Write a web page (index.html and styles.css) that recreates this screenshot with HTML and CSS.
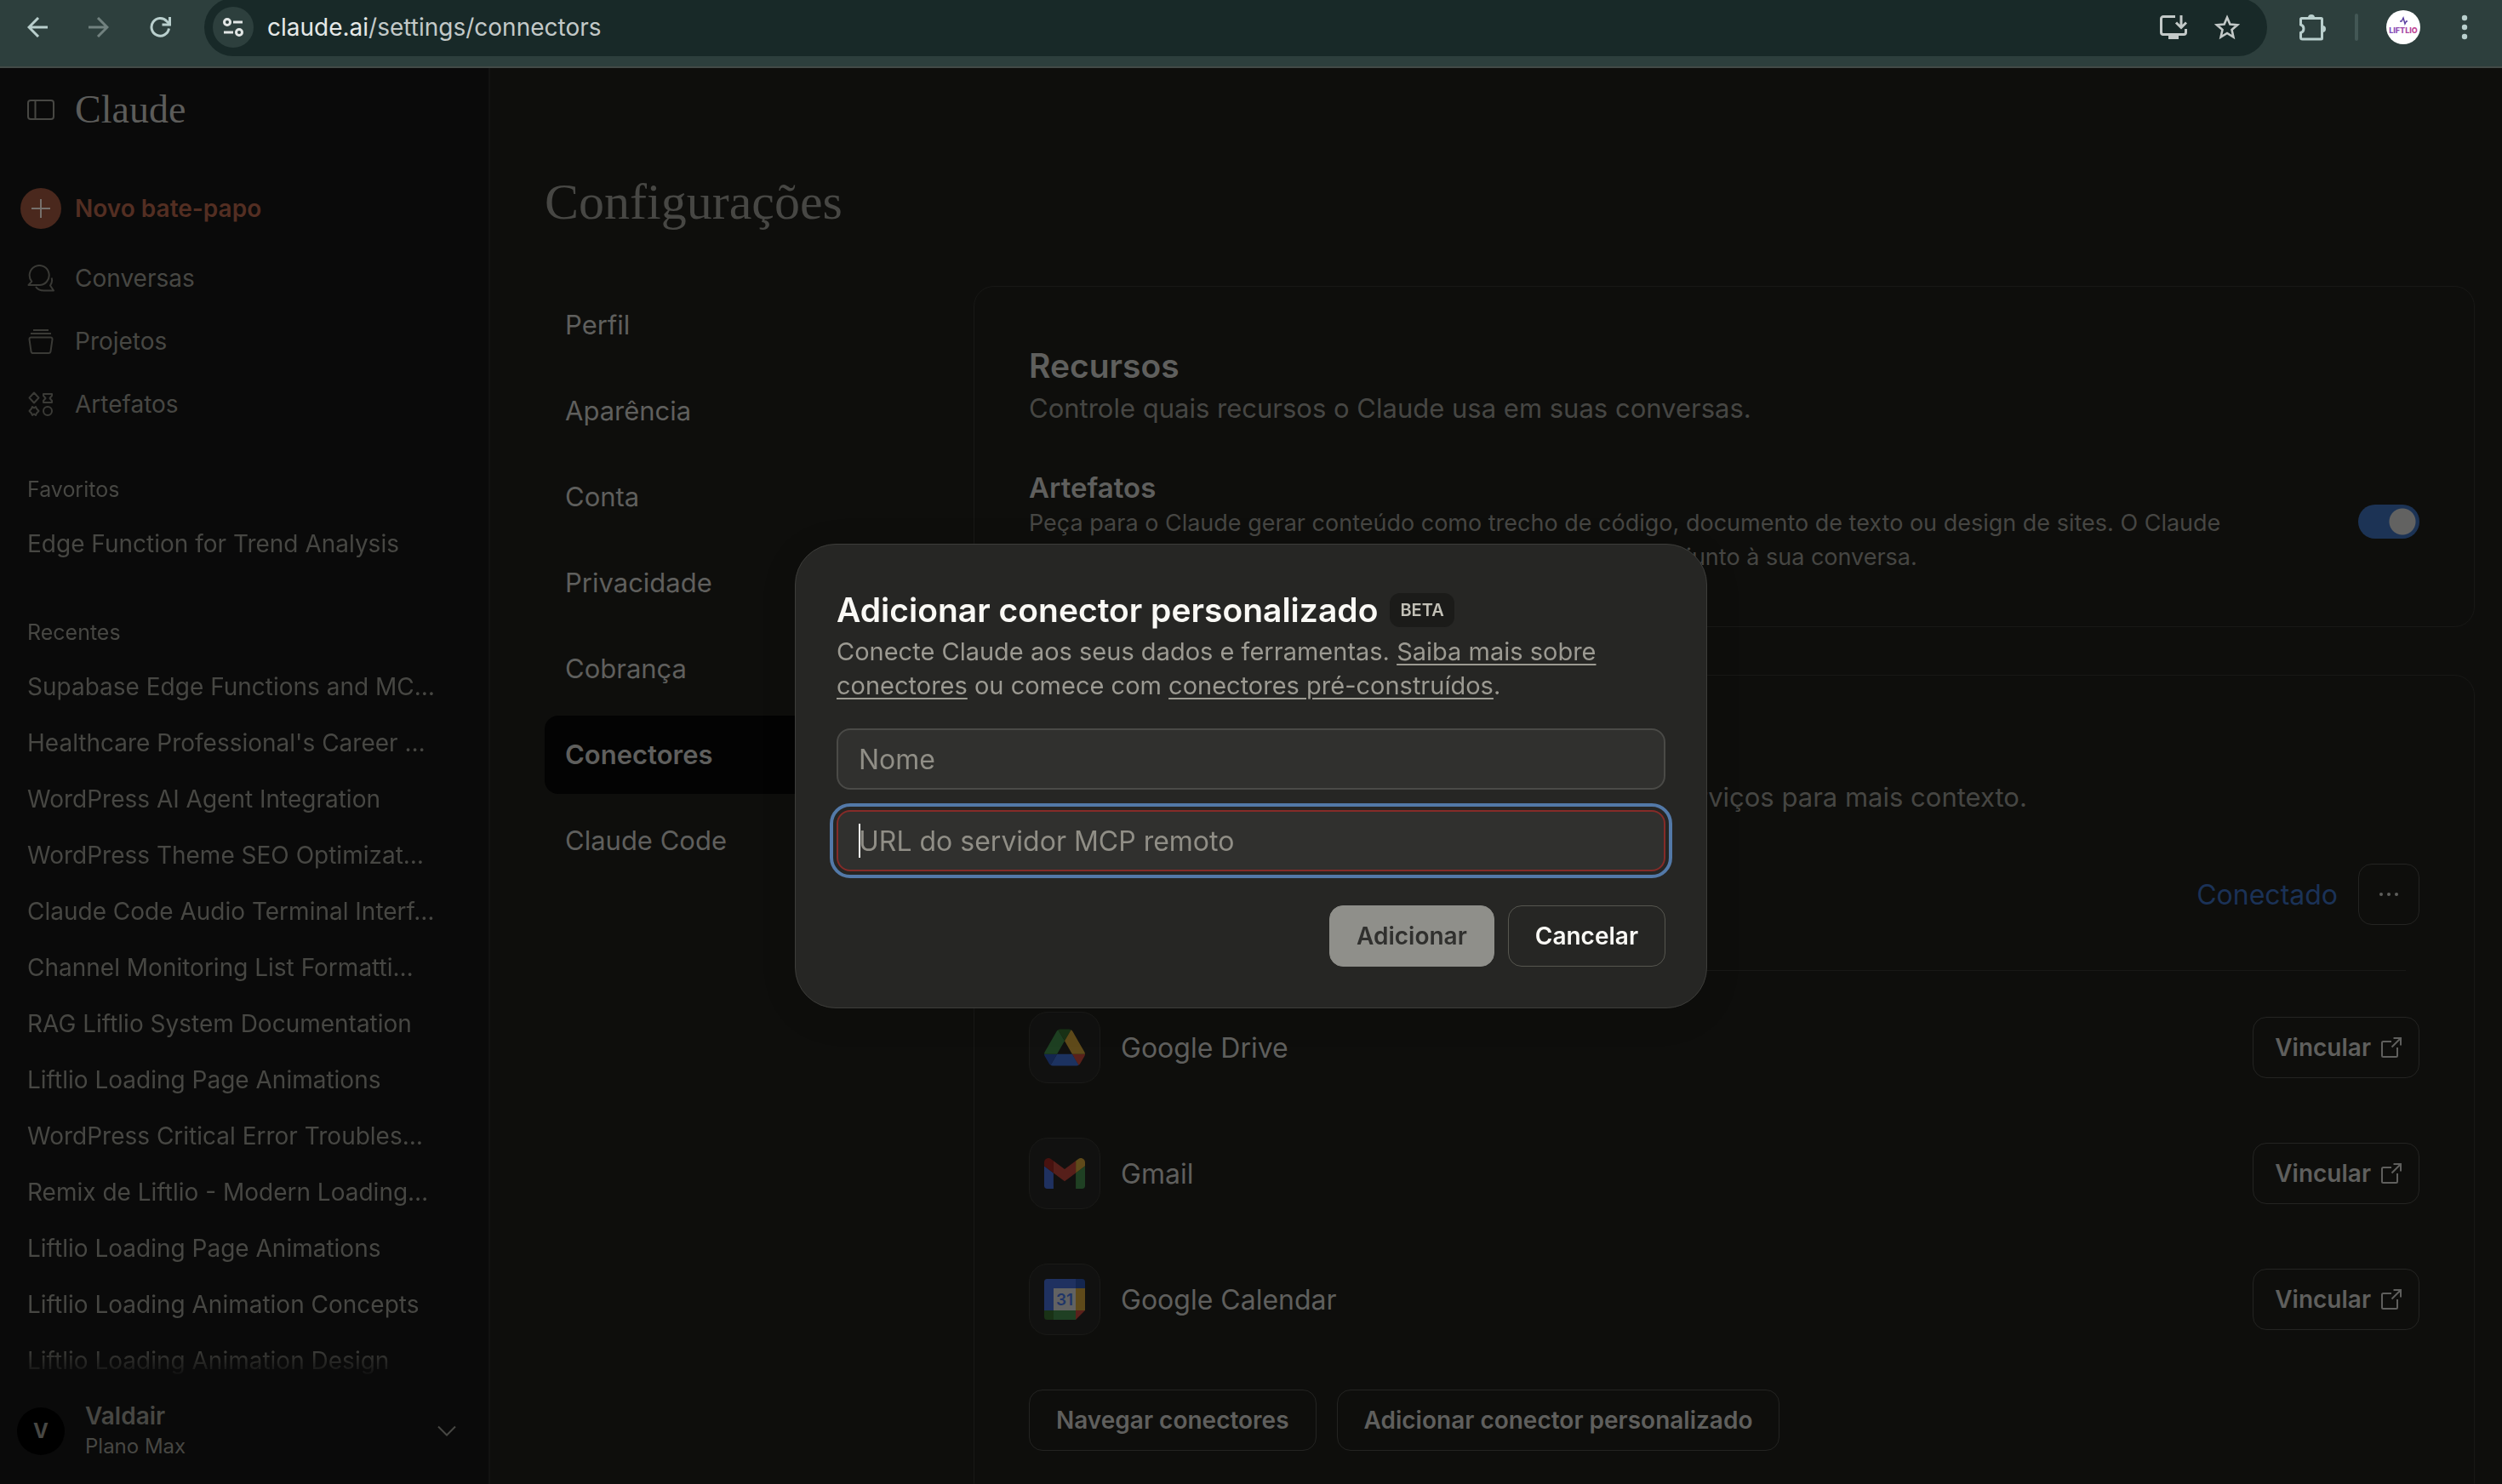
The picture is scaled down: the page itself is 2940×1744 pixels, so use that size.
FILE: index.html
```html
<!DOCTYPE html>
<html lang="pt-BR">
<head>
<meta charset="utf-8">
<title>Configurações - Claude</title>
<link rel="stylesheet" href="styles.css">
</head>
<body>
<header class="toolbar">
  <div class="toolbar-nav">
    <button class="icon-btn" aria-label="Voltar"><svg width="24" height="24" viewBox="0 0 24 24" fill="none" stroke="currentColor" stroke-width="3"><path d="M24 12H2M13 1 2 12l11 11"/></svg></button>
    <button class="icon-btn is-off" aria-label="Avançar"><svg width="24" height="24" viewBox="0 0 24 24" fill="none" stroke="currentColor" stroke-width="3"><path d="M0 12h22M11 1l11 11-11 11"/></svg></button>
    <button class="icon-btn" aria-label="Recarregar"><svg width="26" height="24" viewBox="0 0 26 24" fill="none" stroke="currentColor" stroke-width="3"><path d="M22.5 13.500A10.300 10.300 0 1 1 20 5l3 3"/><path d="M23.500 0v9H14.500"/></svg></button>
  </div>
  <div class="omnibox">
    <button class="site-info" aria-label="Ver informações do site"><svg width="24" height="22" viewBox="0 0 24 22" fill="none" stroke="currentColor" stroke-width="3"><circle cx="5" cy="5" r="3.500"/><path d="M12 5h11M1 17h11"/><circle cx="19" cy="17" r="3.500"/></svg></button>
    <span class="url"><span class="url-host">claude.ai</span>/settings/connectors</span>
    <button class="icon-btn omni" aria-label="Instalar app"><svg width="32" height="28" viewBox="0 0 32 28" fill="none" stroke="currentColor" stroke-width="3"><path d="M18 1.500H4A2.500 2.500 0 0 0 1.500 4v16A2.500 2.500 0 0 0 4 22.500h24a2.500 2.500 0 0 0 2.500-2.500v-4"/><path d="M10 22h12v6H10z" fill="currentColor" stroke="none"/><path d="M25 0v14M19 8.500l6 6 6-6"/></svg></button>
    <button class="icon-btn omni" aria-label="Adicionar aos favoritos"><svg width="30" height="30" viewBox="0 0 30 30" fill="none" stroke="currentColor" stroke-width="2.600"><path d="M15 3.500l3.400 8 8.600.8-6.500 5.700 1.900 8.500-7.400-4.500-7.400 4.500 1.900-8.500L3 12.300l8.600-.8z"/></svg></button>
  </div>
  <div class="toolbar-end">
    <button class="icon-btn" aria-label="Extensões"><svg width="32" height="32" viewBox="0 0 32 32"><path fill="none" stroke="currentColor" stroke-width="3" d="M3.500 5.500h22a1 1 0 0 1 1 1V29a1 1 0 0 1-1 1h-22a2 2 0 0 1-2-2v-5.500a5 5 0 0 0 0-9.500V6.500a1 1 0 0 1 1-1z"/><path fill="currentColor" d="M10 5a4 4 0 0 1 8 0zM27 14a4 4 0 0 1 0 8z"/></svg></button>
    <span class="toolbar-sep"></span>
    <button class="profile" aria-label="Perfil Liftlio"><svg width="40" height="40" viewBox="0 0 40 40"><defs><linearGradient id="lg"><stop offset="0" stop-color="#7a4fc0"/><stop offset="1" stop-color="#c9458f"/></linearGradient></defs><circle cx="20" cy="20" r="20" fill="#fff"/><path d="M16 13h2l2-4 2 7 1.500-3H25" fill="none" stroke="#5a3fa0" stroke-width="1.500"/><text x="20" y="27" text-anchor="middle" class="profile-text" fill="url(#lg)">LIFTLIO</text></svg></button>
    <button class="icon-btn" aria-label="Menu"><svg width="8" height="30" viewBox="0 0 8 30" fill="currentColor"><circle cx="4" cy="4" r="3.200"/><circle cx="4" cy="15" r="3.200"/><circle cx="4" cy="26" r="3.200"/></svg></button>
  </div>
</header>

<div class="app">
  <aside class="sidebar">
    <div class="brand">
      <button class="side-icon" aria-label="Alternar barra lateral"><svg width="32" height="24" viewBox="0 0 32 24" fill="none" stroke="currentColor" stroke-width="2"><rect x="1" y="1" width="30" height="22" rx="3"/><path d="M9.500 1v22"/></svg></button>
      <a class="wordmark" href="#">Claude</a>
    </div>
    <nav class="side-nav">
      <a class="new-chat" href="#"><svg width="48" height="48" viewBox="0 0 48 48"><circle cx="24" cy="24" r="24" fill="#4a281d"/><path d="M24 13v22M13 24h22" stroke="#76706c" stroke-width="2"/></svg>Novo bate-papo</a>
      <a class="side-link" href="#"><svg width="32" height="32" viewBox="0 0 32 32" fill="none" stroke="currentColor" stroke-width="2" stroke-linejoin="round"><path d="M13.700 24H1.500l3.800-4.200A11.500 11.500 0 1 1 13.700 24z"/><path d="M28.600 15.500c1 3 .5 6-1.600 9l4 6H19.500c-4 0-7.500-1.500-9.500-4.500"/></svg>Conversas</a>
      <a class="side-link" href="#"><svg width="32" height="32" viewBox="0 0 32 32" fill="none" stroke="currentColor" stroke-width="2" stroke-linejoin="round"><path d="M7 3h18M4 7h24M4.500 11.500h23a2 2 0 0 1 2 2.300l-2 14a2.500 2.500 0 0 1-2.500 2.200H7a2.500 2.500 0 0 1-2.500-2.200l-2-14a2 2 0 0 1 2-2.300z"/></svg>Projetos</a>
      <a class="side-link" href="#"><svg width="32" height="32" viewBox="0 0 32 32" fill="none" stroke="currentColor" stroke-width="2" stroke-linejoin="round"><path d="M8 2.500l5.500 6-5.500 6-5.500-6zM19 4h10v2l-2.500 3 2.500 3v2H19v-2l2.500-3-2.500-3zM6 19l2 1.500 2-1.500 1 2.300 2.500 2.700-2.500 2.700-1 2.300-2-1.500L6 29l-1-2.300L2.500 24 5 21.300z"/><circle cx="24" cy="24" r="5"/></svg>Artefatos</a>
    </nav>
    <div class="history">
      <h2 class="side-label">Favoritos</h2>
      <ul class="chat-list">
        <li><a href="#">Edge Function for Trend Analysis</a></li>
      </ul>
      <h2 class="side-label">Recentes</h2>
      <ul class="chat-list">
        <li><a href="#">Supabase Edge Functions and MC…</a></li>
        <li><a href="#">Healthcare Professional's Career …</a></li>
        <li><a href="#">WordPress AI Agent Integration</a></li>
        <li><a href="#">WordPress Theme SEO Optimizat…</a></li>
        <li><a href="#">Claude Code Audio Terminal Interf…</a></li>
        <li><a href="#">Channel Monitoring List Formatti…</a></li>
        <li><a href="#">RAG Liftlio System Documentation</a></li>
        <li><a href="#">Liftlio Loading Page Animations</a></li>
        <li><a href="#">WordPress Critical Error Troubles…</a></li>
        <li><a href="#">Remix de Liftlio - Modern Loading…</a></li>
        <li><a href="#">Liftlio Loading Page Animations</a></li>
        <li><a href="#">Liftlio Loading Animation Concepts</a></li>
        <li><a href="#">Liftlio Loading Animation Design</a></li>
      </ul>
    </div>
    <button class="account">
      <span class="avatar">V</span>
      <span class="account-text"><span class="account-name">Valdair</span><span class="account-plan">Plano Max</span></span>
      <svg width="22" height="14" viewBox="0 0 22 14" fill="none" stroke="currentColor" stroke-width="2"><path d="M1 1.500l10 10 10-10"/></svg>
    </button>
  </aside>

  <main class="main">
    <h1 class="page-title">Configurações</h1>
    <div class="columns">
      <nav class="settings-nav">
        <a href="#">Perfil</a>
        <a href="#">Aparência</a>
        <a href="#">Conta</a>
        <a href="#">Privacidade</a>
        <a href="#">Cobrança</a>
        <a href="#" class="is-active" aria-current="page">Conectores</a>
        <a href="#">Claude Code</a>
      </nav>
      <div class="cards">
        <section class="card">
          <h2>Recursos</h2>
          <p class="lead">Controle quais recursos o Claude usa em suas conversas.</p>
          <div class="feature">
            <div>
              <h3 id="art">Artefatos</h3>
              <p class="feature-text">Peça para o Claude gerar conteúdo como trecho de código, documento de texto ou design de sites. O Claude<br>vai mostrar o conteúdo em uma janela dedicada à parte, conjunto à sua conversa.</p>
            </div>
            <input class="toggle" type="checkbox" role="switch" aria-labelledby="art" checked>
          </div>
        </section>
        <section class="card">
          <h2>Conectores</h2>
          <p class="lead">Permita que o Claude consulte outros aplicativos e serviços para mais contexto.</p>
          <div class="connector">
            <span class="tile"></span>
            <span class="connector-name">GitHub</span>
            <span class="connected">Conectado</span>
            <button class="btn more" aria-label="Mais opções"><svg width="22" height="4" viewBox="0 0 22 4" fill="currentColor"><circle cx="2" cy="2" r="2"/><circle cx="11" cy="2" r="2"/><circle cx="20" cy="2" r="2"/></svg></button>
          </div>
          <hr class="divider">
          <ul class="connector-list">
            <li class="connector">
              <span class="tile"><svg width="48" height="44" viewBox="0 0 87.300 78"><path fill="#14264f" d="m6.600 66.850 3.850 6.650c.8 1.400 1.950 2.500 3.300 3.300l13.750-23.800h-27.500c0 1.550.4 3.100 1.200 4.500z"/><path fill="#1e4022" d="m43.650 25-13.750-23.800c-1.350.8-2.500 1.900-3.300 3.300l-25.400 44a9.060 9.060 0 0 0-1.200 4.500h27.500z"/><path fill="#5a211b" d="m73.550 76.800c1.350-.8 2.500-1.900 3.300-3.300l1.600-2.750 7.650-13.250c.8-1.400 1.200-2.950 1.200-4.500h-27.500l5.850 11.500z"/><path fill="#193216" d="m43.650 25 13.750-23.800c-1.350-.8-2.900-1.200-4.500-1.200h-18.500c-1.600 0-3.150.45-4.500 1.200z"/><path fill="#1c3260" d="m59.800 53h-32.300l-13.750 23.800c1.350.8 2.900 1.200 4.500 1.200h50.800c1.600 0 3.150-.45 4.500-1.200z"/><path fill="#5f4a1a" d="m73.400 26.500-12.700-22c-.8-1.400-1.950-2.500-3.300-3.300l-13.750 23.800 16.150 28h27.450c0-1.550-.4-3.100-1.200-4.500z"/></svg></span>
              <span class="connector-name">Google Drive</span>
              <button class="btn link-btn">Vincular<svg width="24" height="24" viewBox="0 0 24 24" fill="none" stroke="currentColor" stroke-width="2"><path d="M12 5H2.500A1.500 1.500 0 0 0 1 6.500v15A1.500 1.500 0 0 0 2.500 23h15a1.500 1.500 0 0 0 1.500-1.500V12M12.500 11.500L23 1M14.500 1H23v8.500"/></svg></button>
            </li>
            <li class="connector">
              <span class="tile"><svg width="48" height="36" viewBox="52 42 88 66"><path fill="#1f3160" d="M58 108h14V74L52 59v43c0 3.320 2.690 6 6 6"/><path fill="#1f4023" d="M120 108h14c3.320 0 6-2.690 6-6V59l-20 15"/><path fill="#5f4a1a" d="M120 48v26l20-15v-8c0-7.420-8.470-11.650-14.400-7.200"/><path fill="#561f1a" d="M72 74V48l24 18 24-18v26L96 92"/><path fill="#48120f" d="M52 51v8l20 15V48l-5.600-4.200c-5.940-4.450-14.400-.22-14.400 7.200"/></svg></span>
              <span class="connector-name">Gmail</span>
              <button class="btn link-btn">Vincular<svg width="24" height="24" viewBox="0 0 24 24" fill="none" stroke="currentColor" stroke-width="2"><path d="M12 5H2.500A1.500 1.500 0 0 0 1 6.500v15A1.500 1.500 0 0 0 2.500 23h15a1.500 1.500 0 0 0 1.500-1.500V12M12.500 11.500L23 1M14.500 1H23v8.500"/></svg></button>
            </li>
            <li class="connector">
              <span class="tile"><svg width="48" height="48" viewBox="0 0 48 48"><path fill="#1f3160" d="M3.500 0H37v11H11v26H0V3.500A3.500 3.500 0 0 1 3.500 0z"/><path fill="#14264f" d="M37 0h7.500A3.500 3.500 0 0 1 48 3.500V11H37z"/><path fill="#5f4a1a" d="M37 11h11v26H37z"/><path fill="#1f4023" d="M11 37h26v11H11z"/><path fill="#193216" d="M0 37h11v11H3.500A3.500 3.500 0 0 1 0 44.500z"/><path fill="#5a211b" d="M37 37h11L37 48z"/><path fill="#626262" d="M11 11h26v26H11z"/><text x="24" y="31" text-anchor="middle" class="cal-day">31</text></svg></span>
              <span class="connector-name">Google Calendar</span>
              <button class="btn link-btn">Vincular<svg width="24" height="24" viewBox="0 0 24 24" fill="none" stroke="currentColor" stroke-width="2"><path d="M12 5H2.500A1.500 1.500 0 0 0 1 6.500v15A1.500 1.500 0 0 0 2.500 23h15a1.500 1.500 0 0 0 1.500-1.500V12M12.500 11.500L23 1M14.500 1H23v8.500"/></svg></button>
            </li>
          </ul>
          <div class="card-actions">
            <button class="btn">Navegar conectores</button>
            <button class="btn">Adicionar conector personalizado</button>
          </div>
        </section>
      </div>
    </div>
  </main>
</div>

<div class="overlay">
  <form class="modal" role="dialog" aria-modal="true" aria-labelledby="dlg-title">
    <div class="modal-head">
      <h2 id="dlg-title">Adicionar conector personalizado</h2>
      <span class="badge">BETA</span>
    </div>
    <p class="modal-text">Conecte Claude aos seus dados e ferramentas. <a href="#">Saiba mais sobre conectores</a> ou comece com <a href="#">conectores pré-construídos</a>.</p>
    <div class="fields">
      <input class="field" type="text" placeholder="Nome" aria-label="Nome">
      <div class="field-wrap">
        <input class="field is-invalid" type="url" placeholder="URL do servidor MCP remoto" aria-label="URL do servidor MCP remoto" aria-invalid="true">
        <span class="caret"></span>
      </div>
    </div>
    <div class="modal-actions">
      <button class="modal-btn primary" type="submit" disabled>Adicionar</button>
      <button class="modal-btn" type="button">Cancelar</button>
    </div>
  </form>
</div>
</body>
</html>
```
FILE: styles.css
```css
* { box-sizing: border-box; }

body {
  margin: 0;
  height: 100vh;
  display: flex;
  flex-direction: column;
  overflow: hidden;
  background: #0e0e0c;
  color: #5f5f5d;
  font-family: Inter, "Liberation Sans", sans-serif;
  font-size: 28px;
}

h1, h2, h3, p, ul { margin: 0; padding: 0; font-weight: 400; }
ul { list-style: none; }
a { color: inherit; text-decoration: none; }
button { font: inherit; color: inherit; background: none; border: 0; padding: 0; cursor: pointer; }
svg { display: block; flex: none; }

/* Browser toolbar */
.toolbar {
  flex: none;
  display: flex;
  align-items: center;
  height: 80px;
  padding: 0 40px 14px 32px;
  background: #2d3f3d;
  border-bottom: 2px solid #434a47;
  color: #b9cfcd;
}
.toolbar-nav { display: flex; align-items: center; gap: 48px; }
.icon-btn { display: flex; }
.is-off { color: #71817f; }
.omnibox {
  flex: 1;
  display: flex;
  align-items: center;
  gap: 32px;
  height: 68px;
  margin: 0 38px;
  padding: 0 32px 0 10px;
  border-radius: 34px;
  background: #182928;
}
.site-info {
  display: flex;
  align-items: center;
  justify-content: center;
  width: 48px;
  height: 48px;
  margin-right: -16px;
  border-radius: 50%;
  background: #2d3f3d;
  color: #e2e6e5;
}
.url { flex: 1; color: #c3c9c8; }
.url-host { color: #e6e9e8; }
.omni { color: #c3c9c8; }
.toolbar-end { display: flex; align-items: center; gap: 33px; }
.toolbar-sep { width: 4px; height: 32px; border-radius: 2px; background: #435755; }
.profile { margin-right: 15px; }
.profile-text { font: 800 9px Inter, sans-serif; }

/* App shell */
.app { flex: 1; min-height: 0; display: flex; }

.sidebar {
  flex: none;
  display: flex;
  flex-direction: column;
  width: 576px;
  background: #0a0a0a;
  border-right: 2px solid #121211;
  color: #474743;
}
.brand { flex: none; display: flex; align-items: center; gap: 24px; height: 97px; padding-left: 32px; }
.wordmark { font: 46px/56px "Liberation Serif", serif; color: #5c5c5a; }
.side-nav { flex: none; display: flex; flex-direction: column; padding-top: 23px; }
.new-chat { display: flex; align-items: center; gap: 16px; height: 90px; padding-left: 24px; color: #532e22; font-weight: 600; }
.side-link { display: flex; align-items: center; gap: 24px; height: 74px; padding-left: 32px; }
.side-link svg { color: #3a3a36; }
.history {
  flex: 1;
  min-height: 0;
  overflow: hidden;
  mask-image: linear-gradient(#000 calc(100% - 40px), transparent);
}
.side-label { height: 48px; margin: 39px 0 7px; padding-left: 32px; font-size: 25px; line-height: 48px; }
.chat-list + .side-label { margin-top: 47px; }
.chat-list a { display: block; height: 66px; padding-left: 32px; line-height: 66px; white-space: nowrap; }
.account { flex: none; display: flex; align-items: center; gap: 24px; height: 124px; padding: 0 38px 0 20px; text-align: left; }
.avatar { width: 56px; height: 56px; border-radius: 50%; background: #000; font-size: 24px; font-weight: 700; line-height: 56px; text-align: center; }
.account-text { flex: 1; display: flex; flex-direction: column; line-height: 36px; }
.account-name { font-weight: 600; }
.account-plan { font-size: 24px; }

/* Settings page */
.main { flex: 1; min-width: 0; padding: 121px 32px 0 64px; }
.page-title { margin-bottom: 63px; font: 60px/72px "Liberation Serif", serif; color: #474744; }
.columns { display: flex; gap: 32px; }
.settings-nav { flex: none; display: flex; flex-direction: column; gap: 9px; width: 472px; }
.settings-nav a { height: 92px; padding-left: 24px; border-radius: 16px; font-size: 31px; line-height: 92px; }
.settings-nav .is-active { background: #030303; font-weight: 600; }
.cards { flex: 1; min-width: 0; display: flex; flex-direction: column; gap: 56px; }
.card { padding: 69px 64px 61px; border: 1px solid #181816; border-radius: 24px; }
.card h2 { margin-bottom: 2px; font-size: 39px; font-weight: 600; line-height: 48px; }
.lead { font-size: 31px; line-height: 48px; color: #464643; }
.feature { display: flex; align-items: center; justify-content: space-between; gap: 64px; margin-top: 47px; }
.feature h3 { font-size: 33px; font-weight: 600; line-height: 44px; }
.feature-text { font-size: 27px; line-height: 40px; color: #464643; }
.toggle {
  appearance: none;
  flex: none;
  width: 72px;
  height: 40px;
  margin: 0;
  border-radius: 20px;
  background: radial-gradient(circle at 52px 20px, #626261 15px, #1c3355 16px);
}
.connector { display: flex; align-items: center; gap: 24px; }
.lead + .connector { margin-top: 48px; }
.connector-list { display: flex; flex-direction: column; gap: 64px; }
.tile {
  display: flex;
  align-items: center;
  justify-content: center;
  width: 84px;
  height: 84px;
  border: 1px solid #1a1a18;
  border-radius: 22px;
  background: #111110;
}
.cal-day { font: 600 19px Inter, sans-serif; fill: #1f3568; }
.connector-name { flex: 1; font-size: 32px; }
.connected { font-size: 32px; color: #1b3257; }
.divider { height: 1px; margin: 47px 16px 48px; border: 0; background: #181816; }
.btn {
  display: flex;
  align-items: center;
  justify-content: center;
  height: 72px;
  padding: 0 31px;
  border: 1px solid #242422;
  border-radius: 16px;
  font-weight: 600;
}
.more { width: 72px; padding: 0; }
.link-btn { gap: 12px; padding: 0 20px 0 25px; }
.card-actions { display: flex; gap: 24px; margin-top: 64px; }

/* Dialog */
.overlay {
  position: fixed;
  inset: 80px 0 0;
  display: flex;
  align-items: center;
  justify-content: center;
}
.modal {
  width: 1072px;
  max-width: 90%;
  padding: 53px 48px 48px;
  border: 1px solid #3d3d3a;
  border-radius: 48px;
  background: #262624;
  box-shadow: 0 8px 48px rgba(0, 0, 0, .08);
}
.modal-head { display: flex; align-items: center; gap: 14px; }
.modal-head h2 { font-size: 39px; font-weight: 600; line-height: 48px; color: #faf9f5; }
.badge { padding: 0 12px; border-radius: 12px; background: #1b1b19; color: #c2c0b6; font-size: 20px; font-weight: 600; line-height: 40px; }
.modal-text { margin-top: 5px; font-size: 29px; line-height: 40px; color: #9c9a92; }
.modal-text a { text-decoration: underline; text-decoration-thickness: 2px; text-underline-offset: 4px; }
.fields { display: flex; flex-direction: column; gap: 24px; margin-top: 30px; }
.field {
  display: block;
  width: 100%;
  height: 72px;
  padding: 0 24px;
  border: 2px solid #4a4a47;
  border-radius: 16px;
  background: #30302e;
  color: #faf9f5;
  font: inherit;
  font-size: 32px;
}
.field::placeholder { color: #908e86; opacity: 1; }
.field-wrap { position: relative; }
.is-invalid { border-color: #852b28; outline: 4px solid #5379a8; outline-offset: 4px; }
.caret { position: absolute; left: 26px; top: 16px; width: 2px; height: 40px; background: #faf9f5; }
.modal-actions { display: flex; justify-content: flex-end; gap: 16px; margin-top: 40px; }
.modal-btn { height: 72px; padding: 0 31px; border: 1px solid #56564f; border-radius: 16px; color: #faf9f5; font-weight: 600; }
.primary { border-color: #8f8f8a; background: #8f8f8a; color: #30302e; }
```
